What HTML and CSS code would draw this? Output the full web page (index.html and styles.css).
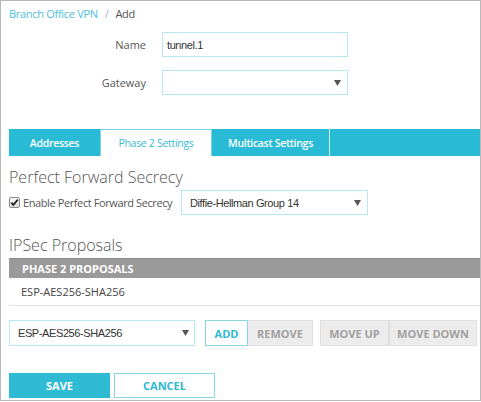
FILE: index.html
```html
<!DOCTYPE html>
<html>
<head>
<meta charset="utf-8">
<link rel="stylesheet" href="styles.css">
</head>
<body>
<div class="frame">
  <div class="crumb"><span class="crumb-link">Branch Office VPN</span><span class="crumb-sep">/</span><span class="crumb-cur">Add</span></div>
  <div class="form-grid">
    <div class="lbl">Name</div>
    <div class="field input"><span class="field-text">tunnel.1</span></div>
    <div class="lbl">Gateway</div>
    <div class="field select"><span class="field-text"></span><svg class="arrow" width="7" height="6" viewBox="0 0 7 6"><path d="M0 0H7L3.5 6Z" fill="#555"/></svg></div>
  </div>
  <div class="tabs">
    <div class="tab t-addr">Addresses</div>
    <div class="tab active t-p2">Phase 2 Settings</div>
    <div class="tab t-mc">Multicast Settings</div>
    <div class="tab-rest"></div>
  </div>
  <h2 class="heading h-pfs">Perfect Forward Secrecy</h2>
  <div class="pfs-row">
    <label class="check"><svg class="cb" width="11" height="11" viewBox="0 0 11 11"><defs><linearGradient id="g" x1="0" y1="0" x2="0" y2="1"><stop offset="0" stop-color="#fafafa"/><stop offset="1" stop-color="#dcdcdc"/></linearGradient></defs><rect x="0.5" y="0.5" width="10" height="10" rx="1.5" fill="url(#g)" stroke="#8a8a8a"/><path d="M2.3 5.6L4.4 7.8L8.8 2.6" fill="none" stroke="#222" stroke-width="1.8"/></svg><span class="check-text">Enable Perfect Forward Secrecy</span></label>
    <div class="field select dh"><span class="field-text">Diffie-Hellman Group 14</span><svg class="arrow" width="7" height="6" viewBox="0 0 7 6"><path d="M0 0H7L3.5 6Z" fill="#555"/></svg></div>
  </div>
  <h2 class="heading h-ipsec">IPSec Proposals</h2>
  <div class="table">
    <div class="thead">PHASE 2 PROPOSALS</div>
    <div class="trow">ESP-AES256-SHA256</div>
  </div>
  <div class="action-row">
    <div class="field select prop"><span class="field-text">ESP-AES256-SHA256</span><svg class="arrow" width="7" height="6" viewBox="0 0 7 6"><path d="M0 0H7L3.5 6Z" fill="#555"/></svg></div>
    <div class="btn-group g-edit">
      <div class="btn btn-outline b-add">ADD</div>
      <div class="btn btn-gray b-rem">REMOVE</div>
    </div>
    <div class="btn-group g-move">
      <div class="btn btn-gray b-up">MOVE UP</div>
      <div class="btn btn-gray b-down">MOVE DOWN</div>
    </div>
  </div>
  <div class="footer">
    <div class="btn btn-primary b-save">SAVE</div>
    <div class="btn btn-outline b-cancel">CANCEL</div>
  </div>
</div>
</body>
</html>
```
FILE: styles.css
```css
* { box-sizing: border-box; }
html, body { margin: 0; padding: 0; background: #fff; }
body { font-family: "Open Sans", "Liberation Sans", sans-serif; color: #555; }
.frame {
  width: 481px;
  height: 401px;
  border: 1px solid #b9b9b9;
  padding: 0 0 0 8px;
  overflow: hidden;
}
.crumb { font-size: 11px; letter-spacing: -0.3px; height: 26px; padding-top: 5px; line-height: 15px; }
.crumb-link { color: #4dc0da; }
.crumb-sep { color: #aaa; margin: 0 7px; }
.crumb-cur { color: #555; }
.form-grid {
  display: grid;
  grid-template-columns: 137px 186px;
  column-gap: 16px;
  row-gap: 13px;
  margin-top: 5px;
}
.lbl { font-size: 11px; text-align: right; line-height: 25px; color: #555; }
.field {
  height: 25px;
  border: 1px solid #b7e8ef;
  display: flex;
  align-items: center;
  padding: 0 6px 0 8px;
  font-family: "Liberation Sans", Arial, sans-serif;
  font-size: 11px;
  letter-spacing: -0.4px;
  color: #333;
}
.input { padding-left: 4px; }
.field-text { flex: 1; }
.select .arrow { flex: none; }
.tabs {
  display: flex;
  margin-top: 34px;
  height: 27px;
  background: #29bbd6;
}
.tab {
  font-size: 10.5px;
  letter-spacing: -0.3px;
  color: #fff;
  font-weight: 600;
  display: flex;
  align-items: center;
  justify-content: center;
  height: 27px;
  flex: none;
}
.t-addr { width: 91px; }
.t-p2 { width: 112px; }
.t-mc { width: 118px; border-right: 1px solid #cdeef5; }
.tab.active {
  background: #fff;
  color: #3cb9d3;
  font-weight: 400;
  border: 1px solid #7dd3e3;
  border-bottom: none;
}
.tab-rest { flex: 1; }
.heading {
  margin: 0;
  font-weight: 300;
  font-size: 16px;
  color: #555;
  line-height: 24px;
}
.h-pfs { margin-top: 9px; }
.pfs-row { display: flex; align-items: center; margin-top: 1px; height: 25px; }
.check { display: flex; align-items: center; font-size: 11px; color: #555; width: 172px; flex: none; white-space: nowrap; }
.check-text { letter-spacing: -0.4px; }
.cb { margin-right: 3px; flex: none; }
.dh { width: 187px; flex: none; }
.h-ipsec { margin-top: 18px; }
.table { margin-top: 1px; }
.thead {
  background: #9a9a9a;
  border-top: 1px solid #8a8a8a;
  height: 20px;
  line-height: 19px;
  color: #fff;
  font-weight: 700;
  font-size: 11px;
  padding-left: 13px;
}
.trow {
  height: 28px;
  line-height: 27px;
  border-bottom: 1px solid #e4e4e4;
  font-size: 11px;
  color: #444;
  padding-left: 12px;
}
.action-row { display: flex; margin-top: 14px; height: 26px; }
.prop { width: 186px; height: 26px; margin-right: 10px; flex: none; padding-right: 5px; }
.btn-group { display: flex; flex: none; }
.g-edit { margin-right: 7px; }
.btn {
  height: 26px;
  display: flex;
  align-items: center;
  justify-content: center;
  font-size: 11px;
  font-weight: 700;
  flex: none;
}
.btn-outline { border: 1px solid #8ad8e6; color: #2db8d3; background: #fff; }
.btn-gray { background: #ececec; border: 1px solid #e0e0e0; color: #a0a0a0; }
.b-add { width: 43px; }
.b-rem { width: 65px; border-left: none; }
.b-up { width: 69px; }
.b-down { width: 88px; border-left: 1px solid #dcdcdc; }
.footer { display: flex; gap: 4px; margin-top: 27px; }
.btn-primary { background: #2fbbd4; color: #fff; border: 1px solid #2fbbd4; }
.b-save { width: 101px; height: 25px; }
.b-cancel { width: 101px; height: 25px; }
```
